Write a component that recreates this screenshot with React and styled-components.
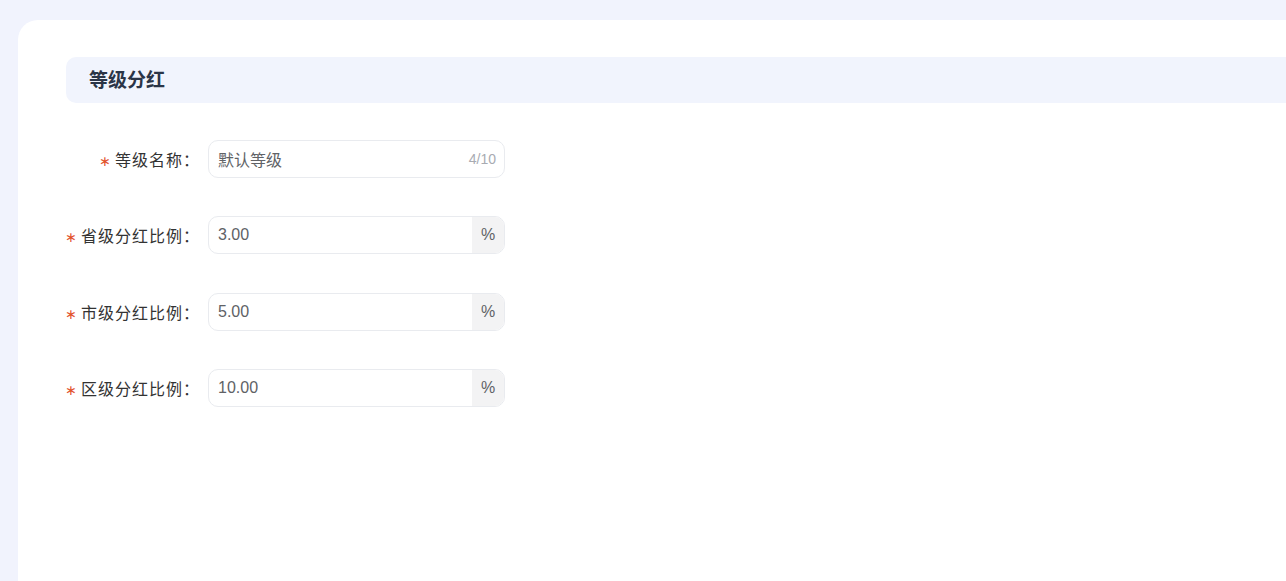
import React, { useState } from "react";
import styled, { createGlobalStyle } from "styled-components";

const GlobalStyle = createGlobalStyle`
  html, body {
    margin: 0;
    padding: 0;
    background: #f1f3fd;
    overflow: hidden;
  }
  body {
    font-family: "Liberation Sans", "Noto Sans CJK SC", sans-serif;
  }
`;

const rows = [
  { key: "province", label: "省级分红比例", value: "3.00" },
  { key: "city", label: "市级分红比例", value: "5.00" },
  { key: "district", label: "区级分红比例", value: "10.00" },
];

function App() {
  const [name, setName] = useState("默认等级");
  const [values, setValues] = useState(
    Object.fromEntries(rows.map((r) => [r.key, r.value]))
  );

  return (
    <Page>
      <GlobalStyle />
      <Card>
        <SectionHeader>等级分红</SectionHeader>
        <Form>
          <FormItem>
            <Label>
              <Star>∗</Star>等级名称：
            </Label>
            <InputBox>
              <Field
                value={name}
                maxLength={10}
                onChange={(e) => setName(e.target.value)}
              />
              <Counter>{name.length}/10</Counter>
            </InputBox>
          </FormItem>
          {rows.map((r) => (
            <FormItem key={r.key}>
              <Label>
                <Star>∗</Star>
                {r.label}：
              </Label>
              <InputBox>
                <Field
                  value={values[r.key]}
                  onChange={(e) =>
                    setValues((v) => ({ ...v, [r.key]: e.target.value }))
                  }
                />
                <Append>%</Append>
              </InputBox>
            </FormItem>
          ))}
        </Form>
      </Card>
    </Page>
  );
}

export default App;

const Page = styled.div`
  min-height: 581px;
  padding: 20px 0 0 18px;
  box-sizing: border-box;
`;

const Card = styled.div`
  background: #fff;
  border-top-left-radius: 20px;
  min-height: 561px;
  padding: 37px 0 0 48px;
  box-sizing: border-box;
`;

const SectionHeader = styled.div`
  height: 46px;
  box-sizing: border-box;
  display: flex;
  align-items: center;
  padding: 0 0 3px 23px;
  background: #f1f4fd;
  border-radius: 10px 0 0 10px;
  font-size: 19px;
  font-weight: bold;
  color: #2b3547;
`;

const Form = styled.div`
  display: flex;
  flex-direction: column;
  gap: 38.4px;
  padding-top: 37px;
`;

const FormItem = styled.div`
  display: flex;
  align-items: center;
  height: 38px;
`;

const Label = styled.label`
  width: 142px;
  box-sizing: border-box;
  padding-right: 8px;
  display: flex;
  align-items: center;
  justify-content: flex-end;
  font-size: 16px;
  color: #333;
  white-space: nowrap;
  letter-spacing: 1px;
`;

const Star = styled.span`
  font-family: "DejaVu Sans", sans-serif;
  color: #e2532d;
  margin-right: 3px;
  font-size: 14px;
  position: relative;
  top: 2px;
`;

const InputBox = styled.div`
  width: 297px;
  height: 38px;
  box-sizing: border-box;
  display: flex;
  align-items: center;
  border: 1px solid #e9ebef;
  border-radius: 10px;
  overflow: hidden;
  background: #fff;
`;

const Field = styled.input`
  flex: 1;
  min-width: 0;
  height: 100%;
  border: none;
  outline: none;
  padding: 0 9px;
  font-family: inherit;
  font-size: 16px;
  color: #606266;
  background: transparent;
`;

const Counter = styled.span`
  font-size: 14px;
  color: #a8abb2;
  padding-right: 8px;
`;

const Append = styled.span`
  width: 32px;
  height: 100%;
  display: flex;
  align-items: center;
  justify-content: center;
  background: #f3f3f4;
  font-size: 16px;
  color: #606266;
`;
